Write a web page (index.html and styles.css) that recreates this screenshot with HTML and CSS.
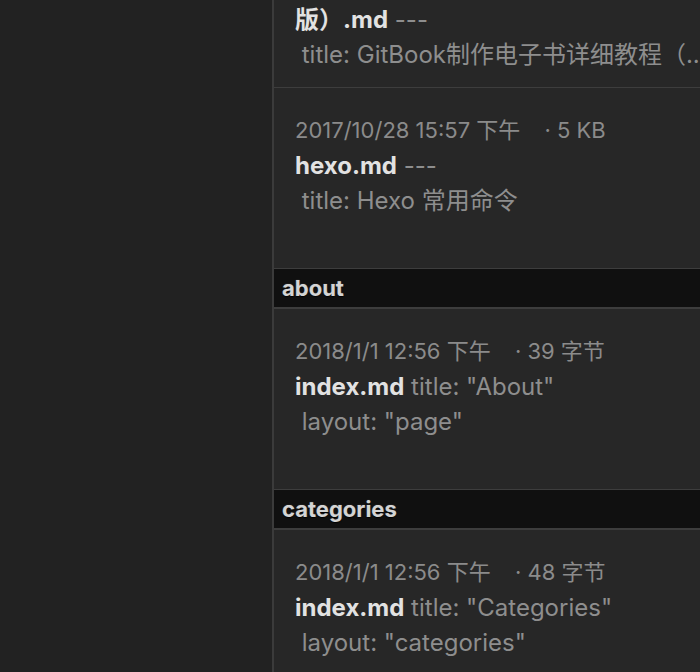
FILE: index.html
```html
<!DOCTYPE html>
<html lang="zh-CN">
<head>
<meta charset="utf-8">
<title>Files</title>
<link rel="stylesheet" href="styles.css">
</head>
<body>
<div class="app">
  <aside class="sidebar"></aside>
  <main class="list">
    <div class="item item-cut">
      <div class="summary"><strong class="name">版）.md</strong> <span class="excerpt">---<br>&nbsp;title: GitBook制作电子书详细教程（...</span></div>
    </div>
    <div class="item">
      <div class="meta">2017/10/28 15:57 下午 <span class="size">· 5 KB</span></div>
      <div class="summary"><strong class="name">hexo.md</strong> <span class="excerpt">---<br>&nbsp;title: Hexo 常用命令</span></div>
    </div>
    <div class="group">about</div>
    <div class="item">
      <div class="meta">2018/1/1 12:56 下午 <span class="size">· 39 字节</span></div>
      <div class="summary"><strong class="name">index.md</strong> <span class="excerpt">title: "About"<br>&nbsp;layout: "page"</span></div>
    </div>
    <div class="group">categories</div>
    <div class="item">
      <div class="meta">2018/1/1 12:56 下午 <span class="size">· 48 字节</span></div>
      <div class="summary"><strong class="name">index.md</strong> <span class="excerpt">title: "Categories"<br>&nbsp;layout: "categories"</span></div>
    </div>
  </main>
</div>
</body>
</html>
```

FILE: styles.css
```css
html, body {
  margin: 0;
  padding: 0;
  height: 100%;
  overflow: hidden;
  background: #222222;
}

.app {
  display: flex;
  height: 672px;
  font-family: Inter, "Noto Sans CJK SC", sans-serif;
}

.sidebar {
  width: 272px;
  flex: none;
  background: #222222;
  border-right: 2px solid #3b3b3b;
}

.list {
  flex: 1;
  min-width: 0;
  background: #272727;
  overflow: hidden;
  font-size: 24px;
  line-height: 35px;
}

.item {
  padding: 25px 0 15px 21px;
  border-bottom: 1px solid #3d3d3d;
  white-space: nowrap;
}

.item-cut {
  padding-top: 2px;
  padding-bottom: 15px;
}

.item-cut .summary {
  height: 70px;
}

.meta {
  color: #8b8b8b;
  font-size: 22px;
}

.size {
  margin-left: 18px;
}

.summary {
  height: 105px;
}

.name {
  color: #e2e2e2;
  font-weight: bold;
}

.excerpt {
  color: #8e8e8e;
}

.group {
  background: #101010;
  color: #d4d4d4;
  font-weight: bold;
  font-size: 22px;
  line-height: 38px;
  padding-left: 8px;
  border-bottom: 2px solid #3d3d3d;
  text-shadow: 0 1px 1px #000, 0 0 1px #777;
}
```
